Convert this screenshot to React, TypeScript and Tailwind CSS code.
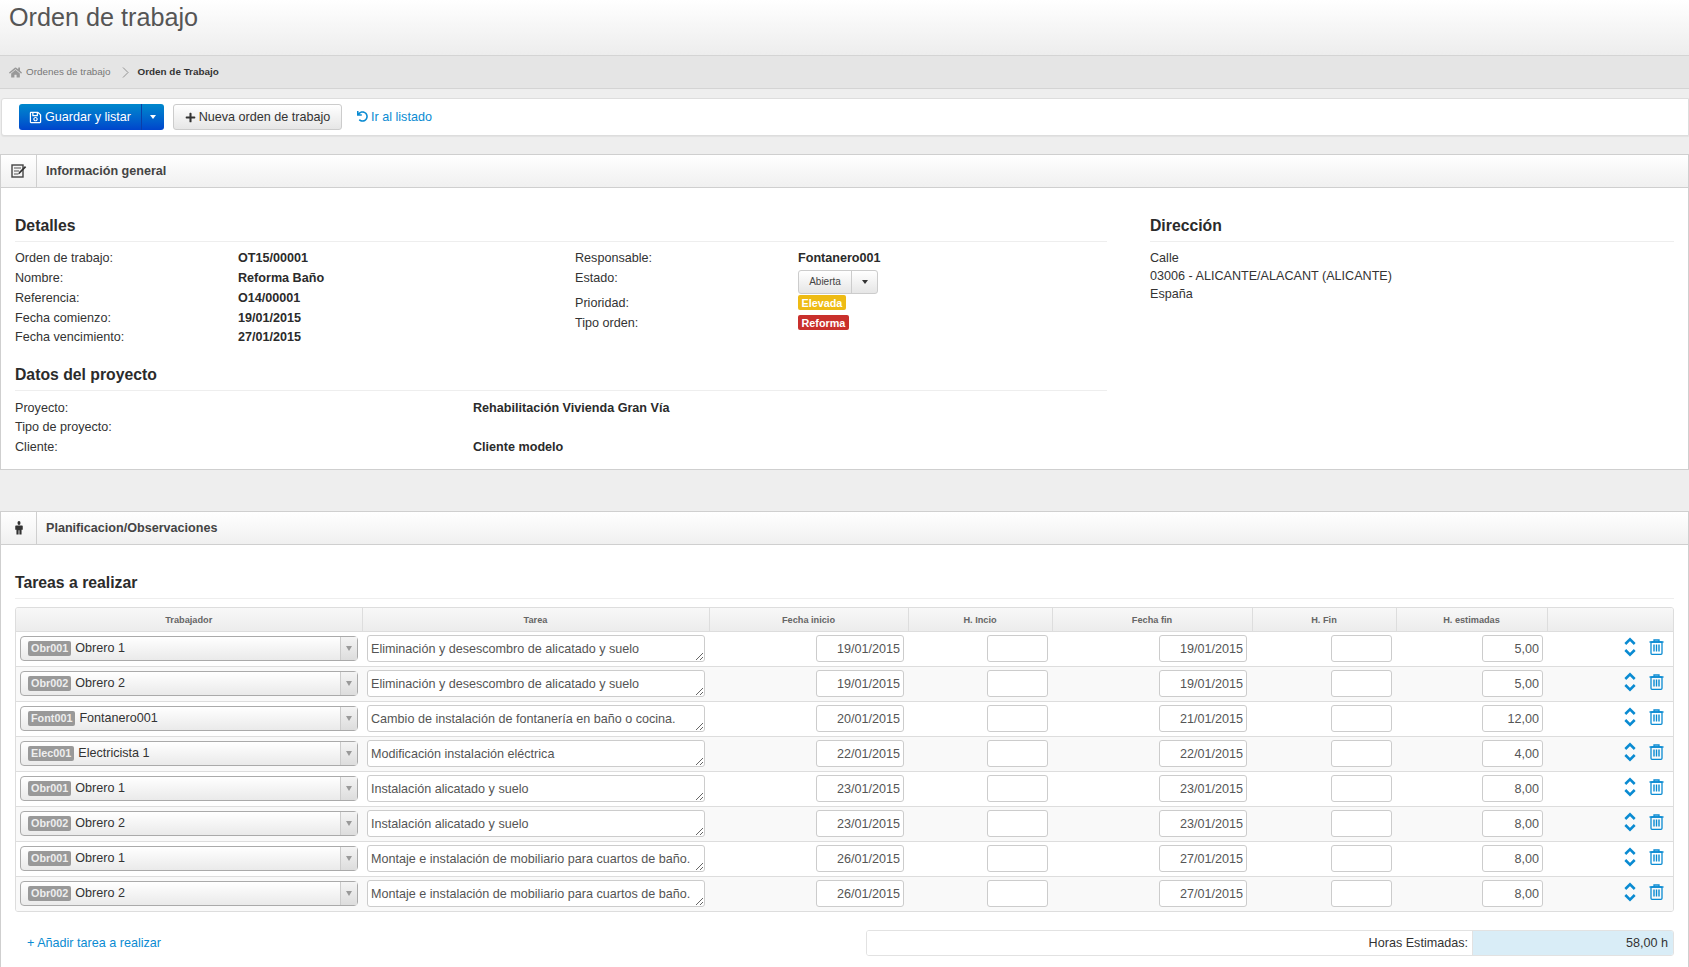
import { FaHome, FaPlus, FaRegSave, FaUndo } from "react-icons/fa";

const tasks = [
  { code: "Obr001", name: "Obrero 1", task: "Eliminación y desescombro de alicatado y suelo", start: "19/01/2015", end: "19/01/2015", hours: "5,00" },
  { code: "Obr002", name: "Obrero 2", task: "Eliminación y desescombro de alicatado y suelo", start: "19/01/2015", end: "19/01/2015", hours: "5,00" },
  { code: "Font001", name: "Fontanero001", task: "Cambio de instalación de fontanería en baño o cocina.", start: "20/01/2015", end: "21/01/2015", hours: "12,00" },
  { code: "Elec001", name: "Electricista 1", task: "Modificación instalación eléctrica", start: "22/01/2015", end: "22/01/2015", hours: "4,00" },
  { code: "Obr001", name: "Obrero 1", task: "Instalación alicatado y suelo", start: "23/01/2015", end: "23/01/2015", hours: "8,00" },
  { code: "Obr002", name: "Obrero 2", task: "Instalación alicatado y suelo", start: "23/01/2015", end: "23/01/2015", hours: "8,00" },
  { code: "Obr001", name: "Obrero 1", task: "Montaje e instalación de mobiliario para cuartos de baño.", start: "26/01/2015", end: "27/01/2015", hours: "8,00" },
  { code: "Obr002", name: "Obrero 2", task: "Montaje e instalación de mobiliario para cuartos de baño.", start: "26/01/2015", end: "27/01/2015", hours: "8,00" },
];

const columns = [
  { label: "Trabajador", className: "w-[346px]" },
  { label: "Tarea", className: "w-[347px]" },
  { label: "Fecha inicio", className: "w-[199px]" },
  { label: "H. Incio", className: "w-[144px]" },
  { label: "Fecha fin", className: "w-[200px]" },
  { label: "H. Fin", className: "w-[144px]" },
  { label: "H. estimadas", className: "w-[151px]" },
  { label: "", className: "" },
];

const NotesIcon = () => (
  <svg width="16" height="14" viewBox="0 0 16 14" fill="none">
    <rect x="1" y="1" width="11" height="12" stroke="#444" strokeWidth="1.4" fill="#f4f4f4" />
    <path d="M3 4h7M3 7h5M3 10h4" stroke="#555" strokeWidth="1" />
    <path d="M7 10.5l1-2.5 6-6 1.2 1.2-6 6z" fill="#333" />
  </svg>
);

const PersonIcon = () => (
  <svg width="8" height="14" viewBox="0 0 10 14" fill="#333" preserveAspectRatio="none">
    <circle cx="5" cy="2" r="1.9" />
    <path d="M1.2 4.4h7.6c.5 0 .9.4.9.9v3.5H8.2V13.6H5.5V9.2h-1v4.4H1.8V8.8H.3V5.3c0-.5.4-.9.9-.9z" />
  </svg>
);

const MoveIcon = () => (
  <svg width="12" height="20" viewBox="0 0 12 20" fill="none" stroke="#0a8bd2" strokeWidth="2.6">
    <path d="M1.3 7L6 2.4 10.7 7" />
    <path d="M1.3 13L6 17.6 10.7 13" />
  </svg>
);

const TrashIcon = () => (
  <svg width="15" height="16" viewBox="0 0 15 16" fill="none" stroke="#0a8bd2" strokeWidth="1.3">
    <path d="M0.5 3h14M5 3V1h5v2" />
    <rect x="2" y="3" width="11" height="12.3" rx="1" />
    <path d="M5 5.5v7M7.5 5.5v7M10 5.5v7" strokeWidth="1.4" />
  </svg>
);

const PanelHeader = ({ icon, title }: { icon: React.ReactNode; title: string }) => (
  <div className="flex h-[34px] items-stretch border border-[#cfcfcf] bg-gradient-to-b from-white to-[#f0f0f0]">
    <div className="flex w-[36px] items-center justify-center border-r border-[#cfcfcf] text-[#444]">{icon}</div>
    <div className="flex items-center pl-[9px] font-bold text-[#444]">{title}</div>
  </div>
);

const Heading = ({ children, className }: { children: React.ReactNode; className: string }) => (
  <h3 className={`h-[26px] border-b border-[#eeeeee] text-[15.75px] leading-[20px] font-bold text-[#2b2b2b] ${className}`}>{children}</h3>
);

const Row = ({ label, value, h = "h-[20px]", labelW = "w-[223px]" }: { label: string; value?: React.ReactNode; h?: string; labelW?: string }) => (
  <div className={`flex leading-[20px] ${h}`}>
    <div className={`shrink-0 text-[#333] ${labelW}`}>{label}</div>
    <div className="font-bold text-[#2b2b2b]">{value}</div>
  </div>
);

const App = () => {
  return (
    <div className="min-h-screen bg-[#eeeeee] font-['Liberation_Sans',Arial,sans-serif] text-[12.6px] text-[#333]">
      <div className="h-[56px] border-b border-[#d4d4d4] bg-gradient-to-b from-white to-[#ededed] pl-[9px]">
        <h1 className="pt-[1px] text-[25.2px] leading-[32px] font-normal text-[#555]">Orden de trabajo</h1>
      </div>

      <div className="flex h-[33px] items-center border-b border-[#d4d4d4] bg-[#e5e5e5] pl-[9px] text-[9.9px] text-[#777]">
        <FaHome className="h-[13px] w-[13px] text-[#999]" />
        <span className="ml-[4px]">Ordenes de trabajo</span>
        <svg width="7" height="11" viewBox="0 0 7 11" fill="none" stroke="#888" strokeWidth="0.9" className="mr-[9px] ml-[11px]">
          <path d="M1 .5L6 5.5 1 10.5" />
        </svg>
        <span className="font-bold text-[#333]">Orden de Trabajo</span>
      </div>

      <div className="mt-[9px] ml-[1px] flex h-[38px] items-center rounded-l-[3px] border border-[#dddddd] bg-white pl-[17px] shadow-[0_1px_1px_rgba(0,0,0,0.05)]">
        <div className="flex h-[26px] w-[145px] rounded-[3px] bg-gradient-to-b from-[#0088cc] to-[#0044cc] text-white">
          <div className="flex w-[123px] items-center justify-center gap-[3px] border-r border-[#0b3fa8]">
            <FaRegSave className="h-[13px] w-[13px]" />
            <span>Guardar y listar</span>
          </div>
          <div className="flex flex-1 items-center justify-center">
            <span className="h-0 w-0 border-x-[3.5px] border-t-[4px] border-x-transparent border-t-white" />
          </div>
        </div>
        <div className="ml-[9px] flex h-[26px] w-[169px] items-center justify-center gap-[3px] rounded-[3px] border border-[#cccccc] bg-gradient-to-b from-white to-[#e6e6e6] text-[#333]">
          <FaPlus className="h-[11px] w-[11px]" />
          <span>Nueva orden de trabajo</span>
        </div>
        <div className="ml-[15px] flex items-center gap-[3px] text-[#0a8bd2]">
          <FaUndo className="h-[11px] w-[11px]" />
          <span>Ir al listado</span>
        </div>
      </div>

      <div className="mt-[18px]">
        <PanelHeader icon={<NotesIcon />} title="Información general" />
        <div className="flex h-[282px] border-x border-b border-[#cfcfcf] bg-white">
          <div className="ml-[14px] w-[1092px] shrink-0">
            <Heading className="mt-[28px]">Detalles</Heading>
            <div className="mt-[6px] flex">
              <div className="w-[560px]">
                <Row label="Orden de trabajo:" value="OT15/00001" />
                <Row label="Nombre:" value="Reforma Baño" />
                <Row label="Referencia:" value="O14/00001" />
                <Row label="Fecha comienzo:" value="19/01/2015" h="h-[19px]" />
                <Row label="Fecha vencimiento:" value="27/01/2015" />
              </div>
              <div>
                <Row label="Responsable:" value="Fontanero001" />
                <Row
                  label="Estado:"
                  h="h-[25px]"
                  value={
                    <div className="mt-[2px] flex h-[24px] w-[80px] rounded-[3px] border border-[#cccccc] bg-gradient-to-b from-white to-[#e6e6e6] text-[10px] font-normal">
                      <div className="flex w-[53px] items-center justify-center border-r border-[#cccccc] text-[#444]">Abierta</div>
                      <div className="flex flex-1 items-center justify-center">
                        <span className="h-0 w-0 border-x-[3px] border-t-[4px] border-x-transparent border-t-[#333]" />
                      </div>
                    </div>
                  }
                />
                <Row
                  label="Prioridad:"
                  value={<span className="mt-[2px] block h-[15px] rounded-[2px] bg-[#eebb14] px-[3.5px] text-[10.8px] leading-[16px] text-[#fff]">Elevada</span>}
                />
                <Row
                  label="Tipo orden:"
                  value={<span className="mt-[2px] block h-[15px] rounded-[2px] bg-[#c9302c] px-[3.5px] text-[10.8px] leading-[16px] text-white">Reforma</span>}
                />
              </div>
            </div>
            <Heading className="mt-[18px]">Datos del proyecto</Heading>
            <div className="mt-[7px]">
              <Row label="Proyecto:" value="Rehabilitación Vivienda Gran Vía" h="h-[19px]" labelW="w-[458px]" />
              <Row label="Tipo de proyecto:" labelW="w-[458px]" />
              <Row label="Cliente:" value="Cliente modelo" labelW="w-[458px]" />
            </div>
          </div>
          <div className="ml-[43px] flex-1 pr-[14px]">
            <Heading className="mt-[28px]">Dirección</Heading>
            <div className="mt-[6px] leading-[18px]">
              <p className="pt-[1px]">Calle</p>
              <p>03006 - ALICANTE/ALACANT (ALICANTE)</p>
              <p>España</p>
            </div>
          </div>
        </div>
      </div>

      <div className="mt-[41px]">
        <PanelHeader icon={<PersonIcon />} title="Planificacion/Observaciones" />
        <div className="border-x border-[#cfcfcf] bg-white px-[14px] pb-[11px]">
          <Heading className="!h-[54px] pt-[28px]">Tareas a realizar</Heading>
          <div className="mt-[8px] overflow-hidden rounded-[3px] border border-[#dddddd]">
            <table className="w-full table-fixed border-collapse">
              <thead>
                <tr className="h-[23px] bg-gradient-to-b from-[#f8f8f8] to-[#ececec]">
                  {columns.map((col, i) => (
                    <th key={i} className={`border-l border-[#dddddd] pt-[4px] text-center text-[9.2px] font-bold text-[#666] first:border-l-0 ${col.className}`}>
                      {col.label}
                    </th>
                  ))}
                </tr>
              </thead>
              <tbody>
                {tasks.map((t, i) => (
                  <tr key={i} className={`h-[35px] border-t border-[#dddddd] ${i % 2 === 1 ? "bg-[#f9f9f9]" : "bg-white"}`}>
                    <td className="px-[4px]">
                      <div className="flex h-[25px] items-stretch rounded-[4px] border border-[#aaaaaa] bg-gradient-to-b from-white to-[#eaeaea]">
                        <div className="flex flex-1 items-center pb-[1px] pl-[7px]">
                          <span className="rounded-[2px] bg-[#999999] px-[3px] text-[10.8px] leading-[15px] font-bold text-[#eeeeee]">{t.code}</span>
                          <span className="ml-[4px] text-[#333]">{t.name}</span>
                        </div>
                        <div className="flex w-[17px] items-center justify-center border-l border-[#cccccc] bg-gradient-to-b from-[#f4f4f4] to-[#dddddd]">
                          <span className="h-0 w-0 border-x-[3px] border-t-[5px] border-x-transparent border-t-[#999]" />
                        </div>
                      </div>
                    </td>
                    <td className="pr-[4px] pl-[5px]">
                      <textarea
                        rows={1}
                        defaultValue={t.task}
                        className="block h-[27px] w-full overflow-hidden rounded-[3px] border border-[#cccccc] bg-white px-[3px] pt-[6px] text-[12.6px] leading-[15px] text-[#555]"
                      />
                    </td>
                    <td className="pr-[4px]">
                      <input readOnly value={t.start} className="ml-auto block h-[27px] w-[88px] rounded-[3px] border border-[#cccccc] bg-white pr-[3px] text-right text-[12.6px] text-[#555]" />
                    </td>
                    <td className="pr-[4px]">
                      <input readOnly value="" className="ml-auto block h-[27px] w-[61px] rounded-[3px] border border-[#cccccc] bg-white" />
                    </td>
                    <td className="pr-[5px]">
                      <input readOnly value={t.end} className="ml-auto block h-[27px] w-[88px] rounded-[3px] border border-[#cccccc] bg-white pr-[3px] text-right text-[12.6px] text-[#555]" />
                    </td>
                    <td className="pr-[4px]">
                      <input readOnly value="" className="ml-auto block h-[27px] w-[61px] rounded-[3px] border border-[#cccccc] bg-white" />
                    </td>
                    <td className="pr-[4px]">
                      <input readOnly value={t.hours} className="ml-auto block h-[27px] w-[61px] rounded-[3px] border border-[#cccccc] bg-white pr-[3px] text-right text-[12.6px] text-[#555]" />
                    </td>
                    <td>
                      <div className="flex items-center justify-end gap-[13px] pr-[9px] pb-[4px]">
                        <MoveIcon />
                        <TrashIcon />
                      </div>
                    </td>
                  </tr>
                ))}
              </tbody>
            </table>
          </div>
          <div className="mt-[18px] flex items-center justify-between">
            <span className="pt-[1px] pl-[12px] text-[#0a8bd2]">+ Añadir tarea a realizar</span>
            <div className="flex h-[26px] w-[808px] overflow-hidden rounded-[3px] border border-[#e2e2e2]">
              <div className="flex flex-1 items-center justify-end bg-white pr-[4px]">Horas Estimadas:</div>
              <div className="flex w-[201px] items-center justify-end border-l border-[#e2e2e2] bg-[#d9edf7] pr-[5px]">58,00 h</div>
            </div>
          </div>
        </div>
      </div>
    </div>
  );
};

export default App;
